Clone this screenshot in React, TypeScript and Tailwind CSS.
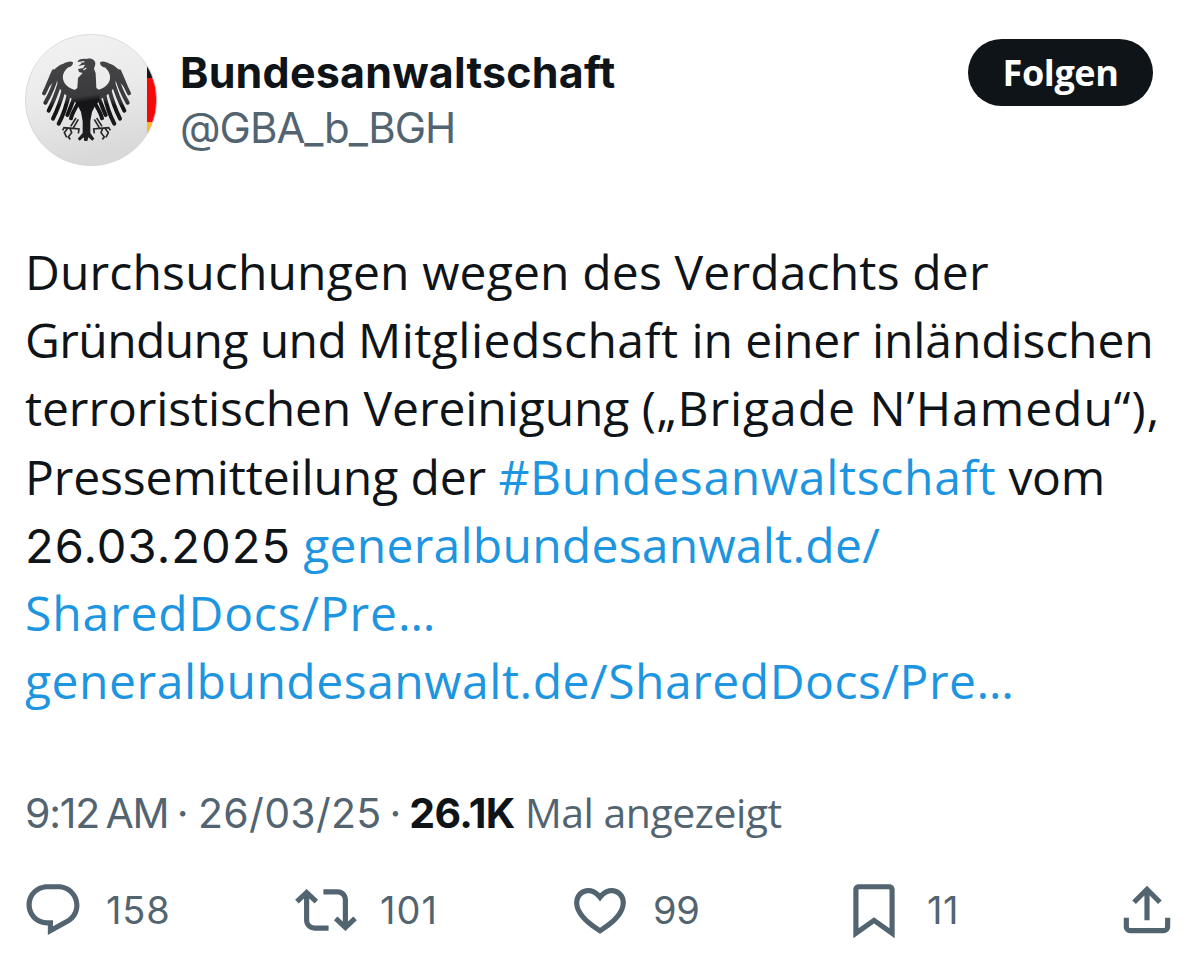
import React from 'react';

interface Stat {
  label: string;
  value?: string;
  path: string;
  box: string;
  text: string;
}

const stats: Stat[] = [
  {
    label: 'Antworten',
    value: '158',
    path: 'M1.751 10c0-4.42 3.584-8 8.005-8h4.366c4.49 0 8.129 3.64 8.129 8.13 0 2.96-1.607 5.68-4.196 7.11l-8.054 4.46v-3.69h-.067c-4.49.1-8.183-3.51-8.183-8.01zm8.005-6c-3.317 0-6.005 2.69-6.005 6 0 3.37 2.77 6.08 6.138 6.01l.351-.01h1.761v2.3l5.087-2.81c1.951-1.08 3.163-3.13 3.163-5.36 0-3.39-2.744-6.13-6.129-6.13H9.756z',
    box: 'w-[273px]',
    text: 'ml-[22px] tracking-[0.8px]',
  },
  {
    label: 'Reposten',
    value: '101',
    path: 'M4.5 3.88l4.432 4.14-1.364 1.46L5.5 7.55V16c0 1.1.896 2 2 2H13v2H7.5c-2.209 0-4-1.79-4-4V7.55L1.432 9.48.068 8.02 4.5 3.88zM16.5 6H11V4h5.5c2.209 0 4 1.79 4 4v8.45l2.068-1.93 1.364 1.46-4.432 4.14-4.432-4.14 1.364-1.46 2.068 1.93V8c0-1.1-.896-2-2-2z',
    box: 'w-[274px]',
    text: 'ml-[23px] tracking-[1px]',
  },
  {
    label: 'Gefällt mir',
    value: '99',
    path: 'M16.697 5.5c-1.222-.06-2.679.51-3.89 2.16l-.805 1.09-.806-1.09C9.984 6.01 8.526 5.44 7.304 5.5c-1.243.07-2.349.78-2.91 1.91-.552 1.12-.633 2.78.479 4.82 1.074 1.97 3.257 4.27 7.129 6.61 3.87-2.34 6.052-4.64 7.126-6.61 1.111-2.04 1.03-3.7.477-4.82-.561-1.13-1.666-1.84-2.908-1.91zm4.187 7.69c-1.351 2.48-4.001 5.12-8.379 7.67l-.503.3-.504-.3c-4.379-2.55-7.029-5.19-8.382-7.67-1.36-2.5-1.41-4.86-.514-6.67.887-1.79 2.647-2.91 4.601-3.01 1.651-.09 3.368.56 4.798 2.01 1.429-1.45 3.146-2.1 4.796-2.01 1.954.1 3.714 1.22 4.601 3.01.896 1.81.846 4.17-.514 6.67z',
    box: 'w-[274px]',
    text: 'ml-[22px] tracking-[-0.4px]',
  },
  {
    label: 'Lesezeichen',
    value: '11',
    path: 'M4 4C4 2.9 4.9 2 6 2h12c1.1 0 2 .9 2 2v18.94l-8-5.71-8 5.71V4zM6.3 4c-.17 0-.3.13-.3.3v14.76l6-4.29 6 4.29V4.3c0-.17-.13-.3-.3-.3H6.3z',
    box: 'w-[273px]',
    text: 'ml-[22px] tracking-[0.5px]',
  },
  {
    label: 'Teilen',
    path: 'M12 2.59l5.7 5.7-1.41 1.42L13 6.41V16h-2V6.41l-3.3 3.3-1.41-1.42L12 2.59zM21 15l-.02 3.51c0 1.38-1.12 2.49-2.5 2.49H5.5C4.11 21 3 19.88 3 18.5V15h2v3.5c0 .28.22.5.5.5h12.98c.28 0 .5-.22.5-.5L19 15h2z',
    box: 'w-[62px]',
    text: '',
  },
];

// one half of the eagle, mirrored for the other side
const Wing: React.FC = () => (
  <g>
    <path d="M174 113C166 108 155 112 145 117C126 122 112 139 106 158C99 172 98 182 99 190C110 178 121 167 126 158C124 184 140 205 165 219L192 236V198C170 196 148 184 144 163C142 148 150 136 160 128C168 128 174 121 174 113Z" />
    <g fill="none" stroke="url(#feather)" strokeWidth="12" strokeLinecap="round">
      <path d="M116 140C106 160 101 180 87 206" />
      <path d="M123 158C117 184 106 208 91 234" />
      <path d="M133 178C125 206 114 232 101 258" />
      <path d="M147 192C139 222 129 252 114 282" />
      <path d="M163 202C156 236 147 268 131 297" />
      <path d="M180 214C170 238 164 256 157 271" />
      <path d="M195 224C185 246 172 262 168 281" />
    </g>
  </g>
);

const Avatar: React.FC = () => (
  <svg viewBox="30 28 396 396" className="w-[132px] h-[132px] shrink-0">
    <defs>
      <linearGradient id="disc-fill" x1="0" y1="0" x2="0.25" y2="1">
        <stop offset="0" stopColor="#f3f3f4" />
        <stop offset="0.5" stopColor="#ebebec" />
        <stop offset="1" stopColor="#d9d9da" />
      </linearGradient>
      <linearGradient id="feather" gradientUnits="userSpaceOnUse" x1="200" y1="100" x2="235" y2="350">
        <stop offset="0" stopColor="#454547" />
        <stop offset="0.45" stopColor="#3a3a3c" />
        <stop offset="0.52" stopColor="#141416" />
        <stop offset="1" stopColor="#202022" />
      </linearGradient>
      <clipPath id="disc">
        <circle cx="228" cy="226" r="197" />
      </clipPath>
    </defs>
    <g clipPath="url(#disc)">
      <rect x="30" y="28" width="396" height="396" fill="url(#disc-fill)" />
      <rect x="396" y="28" width="30" height="132" fill="#1c1515" />
      <rect x="396" y="160" width="30" height="133" fill="#f40808" />
      <rect x="396" y="293" width="30" height="131" fill="#fdb92a" />
    </g>
    <circle cx="228" cy="226" r="197" fill="none" stroke="#cfcfd1" strokeWidth="2" />
    {/* talons */}
    <g fill="none" stroke="#2a2a2c" strokeWidth="5">
      <path d="M190 284L174 311L147 309L143 317M174 311L192 313L190 326M165 311L170 324L160 337L166 344M158 311L148 324L155 338M183 280L167 305" />
      <path d="M238 284L254 311L281 309L286 317M254 311L236 313L238 326M263 311L258 324L268 337L262 344M270 311L280 324L273 338M245 280L261 305" />
    </g>
    <g fill="url(#feather)">
      <Wing />
      <g transform="translate(429 0) scale(-1 1)">
        <Wing />
      </g>
      {/* head and body */}
      <path d="M187 112C192 102 205 102 214 103C230 98 242 106 241 119L237 132L242 146L244 190L253 197V228L240 244L231 262L226 290V325L238 342L232 348L220 338L217 349H208L206 338L194 348L188 342L203 325V290L198 262L189 244L178 228V197L187 190L189 160L203 145L192 142L189 133L205 130L207 124H190L200 116Z" />
    </g>
    <path d="M188 114L208 111M191 126L209 122M205 136L214 130" fill="none" stroke="#ededee" strokeWidth="3.5" />
  </svg>
);

const App: React.FC = () => {
  return (
    <div className="w-[1200px] h-[980px] bg-white overflow-hidden font-['Inter',sans-serif] text-[#0f1419]">
      {/* Author */}
      <div className="flex items-start pl-[25px] pt-[34px] h-[238px]">
        <Avatar />
        <div className="ml-[23px] flex-1 pt-[10px] whitespace-nowrap">
          <div className="h-[56px] leading-[56px] text-[43px] font-bold tracking-[0.2px]">Bundesanwaltschaft</div>
          <div className="h-[56px] leading-[56px] text-[42px] text-[#536471] tracking-[-1px]">@GBA_b_BGH</div>
        </div>
        <button className="mt-[5px] mr-[47px] w-[185px] h-[67px] rounded-full bg-[#0f1419] text-white font-['Open_Sans',sans-serif] font-bold text-[36px] tracking-[-0.4px]">
          Folgen
        </button>
      </div>

      {/* Post text */}
      <div className="pl-[25px] h-[478px] font-['Open_Sans',sans-serif] text-[48px] leading-[68.2px] whitespace-nowrap">
        <div><span className="tracking-[0.16px]">Durchsuchungen wegen des Verdachts der</span></div>
        <div>
          <span className="tracking-[-0.6px]">Gründung und </span>
          <span className="tracking-[0.45px]">Mitgliedschaft </span>
          <span className="tracking-[-0.12px]">in einer inländischen</span>
        </div>
        <div>
          <span className="tracking-[-0.1px]">terroristischen Vereinigung </span>
          <span className="tracking-[0.98px]">(„Brigade N’Hamedu“),</span>
        </div>
        <div>
          <span className="tracking-[-0.12px]">Pressemitteilung der </span>
          <span className="tracking-[0.7px] text-[#1d95e0]">#Bundesanwaltschaft</span>
          <span className="tracking-[-0.3px]"> vom</span>
        </div>
        <div className="h-[68.2px]">
          <span className="font-['Inter',sans-serif] text-[47px] tracking-[1.1px]">26.03.2025</span>
          <span className="tracking-[-0.5px]"> </span>
          <span className="tracking-[0.25px] text-[#1d95e0]">generalbundesanwalt.de/</span>
        </div>
        <div className="text-[#1d95e0]"><span className="tracking-[0.85px]">SharedDocs/Pre…</span></div>
        <div className="text-[#1d95e0]"><span className="tracking-[0.53px]">generalbundesanwalt.de/SharedDocs/Pre…</span></div>
      </div>

      {/* Date and views */}
      <div className="pl-[25px] mt-[68px] h-[56px] leading-[56px] text-[41px] text-[#536471] whitespace-nowrap">
        <span className="tracking-[-1.2px] [word-spacing:-4px]">9:12 AM </span>
        <span className="ml-[2px] tracking-[-1px] [word-spacing:-4px]">· </span>
        <span className="ml-[4px] tracking-[0.3px] [word-spacing:-4px]">26/03/25 · </span>
        <span className="tracking-[-0.6px] font-bold text-[#0f1419]">26.1K</span>
        <span className="tracking-[-0.5px] font-['Open_Sans',sans-serif]"> Mal angezeigt</span>
      </div>

      {/* Actions */}
      <div className="flex pl-[22px] mt-[39px] text-[38px] leading-[62px] text-[#536471]">
        {stats.map((stat) => (
          <div key={stat.label} className={`flex shrink-0 ${stat.box}`}>
            <svg viewBox="0 0 24 24" className="w-[62px] h-[62px] shrink-0" fill="currentColor" aria-label={stat.label}>
              <path d={stat.path} />
            </svg>
            {stat.value && <span className={stat.text}>{stat.value}</span>}
          </div>
        ))}
      </div>
    </div>
  );
};

export default App;
